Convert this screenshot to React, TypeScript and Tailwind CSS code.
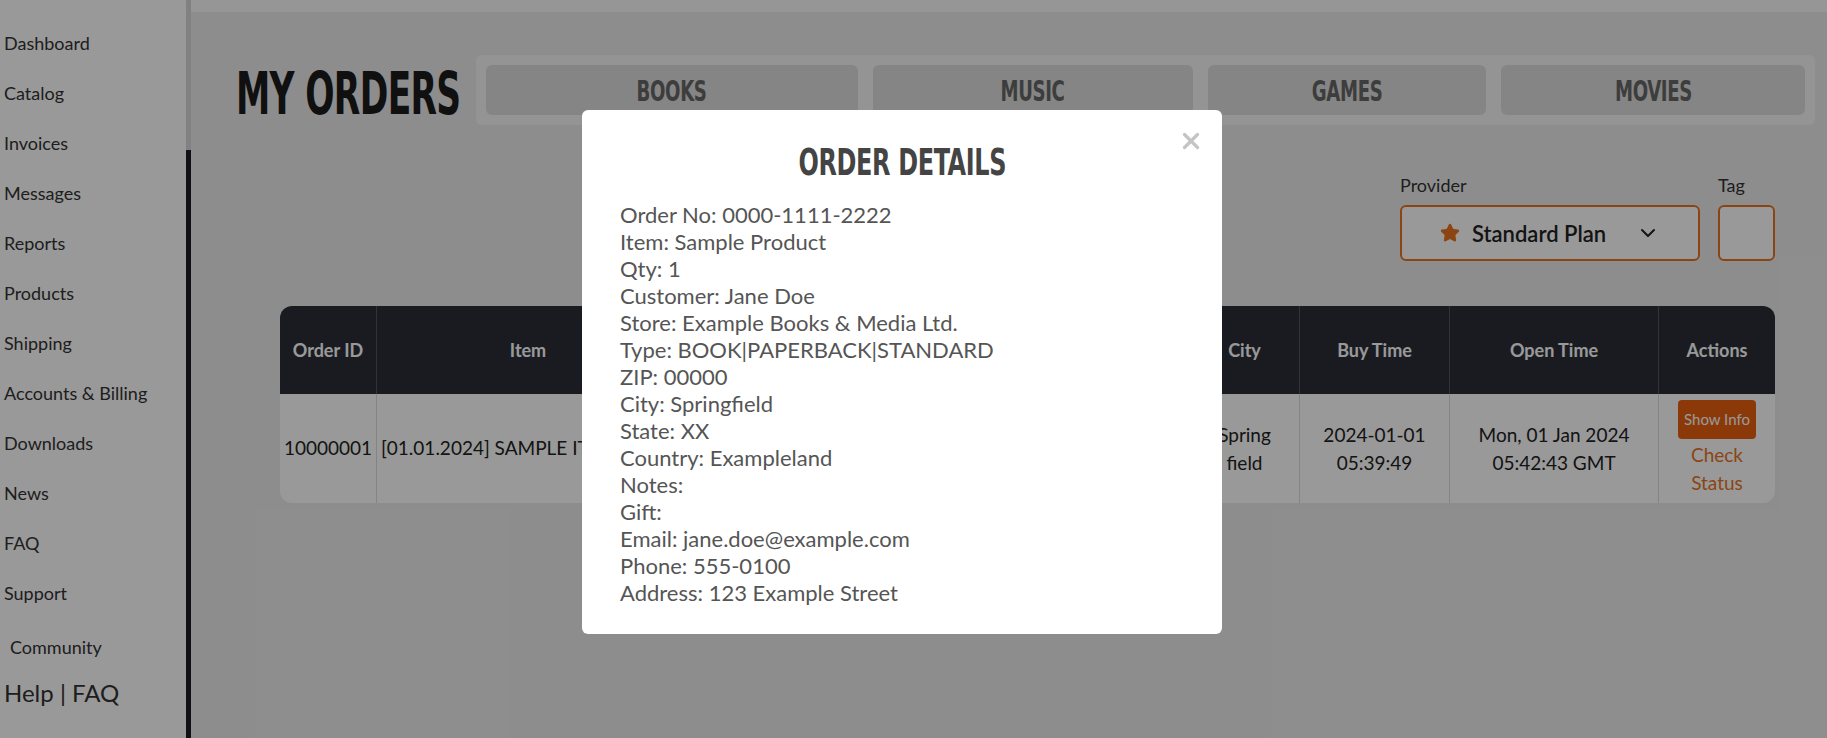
import React from 'react';
import { ChevronDown, Star, X } from 'lucide-react';

const navItems = [
  'Dashboard',
  'Catalog',
  'Invoices',
  'Messages',
  'Reports',
  'Products',
  'Shipping',
  'Accounts & Billing',
  'Downloads',
  'News',
  'FAQ',
  'Support',
];

const tabs = [
  { label: 'BOOKS', w: 'w-[372px]' },
  { label: 'MUSIC', w: 'w-[320px]' },
  { label: 'GAMES', w: 'w-[278px]' },
  { label: 'MOVIES', w: 'w-[304px]' },
];

const details = [
  'Order No: 0000-1111-2222',
  'Item: Sample Product',
  'Qty: 1',
  'Customer: Jane Doe',
  'Store: Example Books & Media Ltd.',
  'Type: BOOK|PAPERBACK|STANDARD',
  'ZIP: 00000',
  'City: Springfield',
  'State: XX',
  'Country: Exampleland',
  'Notes:',
  'Gift:',
  'Email: jane.doe@example.com',
  'Phone: 555-0100',
  'Address: 123 Example Street',
];

const condensed = { fontFamily: '"DejaVu Sans Condensed", "DejaVu Sans", sans-serif' };

function App() {
  return (
    <div className="relative w-[1827px] h-[738px] overflow-hidden bg-[#ececec] font-['Lato',sans-serif] text-[#444]">
      <div className="flex h-full">
        {/* Sidebar */}
        <aside className="flex w-[191px] shrink-0 h-full">
          <div className="w-[186px] bg-white pt-[30px]">
            <ul className="flex flex-col">
              {navItems.map((item) => (
                <li key={item} className="h-[50px] pl-1 text-[18px] text-[#333] whitespace-nowrap">
                  {item}
                </li>
              ))}
            </ul>
            <div className="mt-[4px] pl-[10px] text-[18px] text-[#333]">Community</div>
            <div className="mt-[14px] pl-1 text-[24px] text-[#333]">Help | FAQ</div>
          </div>
          <div className="flex flex-col w-[5px]">
            <div className="h-[150px] bg-[#d8d8d8]" />
            <div className="flex-1 bg-[#1a1d24]" />
          </div>
        </aside>

        {/* Main */}
        <main className="flex-1 flex flex-col">
          <div className="h-[12px] bg-[#fafafa]" />
          <div className="flex items-center pl-[45px] pr-[11px] mt-[43px]">
            <div className="w-[240px]">
              <h1
                className="inline-block origin-left scale-x-[0.66] text-[58px] font-bold tracking-[-1px] text-[#1b1b1b] leading-none whitespace-nowrap translate-y-[4px]"
                style={condensed}
              >
                MY ORDERS
              </h1>
            </div>
            <div className="flex gap-[15px] bg-[#f7f7f7] rounded-md p-[10px] h-[70px]">
              {tabs.map((t) => (
                <button
                  key={t.label}
                  className={`${t.w} h-[50px] rounded-md bg-[#dedede] text-[#666]`}
                >
                  <span
                    className="inline-block scale-x-[0.72] text-[28px] font-bold tracking-[-0.5px] translate-y-[2px]"
                    style={condensed}
                  >
                    {t.label}
                  </span>
                </button>
              ))}
            </div>
          </div>

          {/* Filters */}
          <div className="flex justify-end gap-[18px] pr-[52px] mt-[47px]">
            <div className="flex flex-col gap-[6px]">
              <span className="text-[18px] text-[#333]">Provider</span>
              <div className="flex items-center gap-[12px] w-[300px] h-[56px] border-2 border-[#e8731f] rounded-md bg-white px-[38px]">
                <Star className="w-5 h-5 fill-[#e8731f] text-[#e8731f]" />
                <span className="text-[22px] font-semibold text-[#222]">Standard Plan</span>
                <ChevronDown className="w-6 h-6 ml-auto text-[#222]" />
              </div>
            </div>
            <div className="flex flex-col gap-[6px]">
              <span className="text-[18px] text-[#333]">Tag</span>
              <div className="w-[57px] h-[56px] border-2 border-[#e8731f] rounded-md bg-white" />
            </div>
          </div>

          {/* Table */}
          <div className="ml-[89px] mr-[52px] mt-[45px] rounded-xl overflow-hidden bg-white">
            <div className="flex h-[88px] bg-[#2a2e38] text-white text-[18px] font-bold">
              <div className="w-[97px] flex items-center justify-center border-r border-[#555]">Order ID</div>
              <div className="w-[303px] flex items-center justify-center border-r border-[#555]">Item</div>
              <div className="w-[210px] border-r border-[#555]" />
              <div className="w-[300px] border-r border-[#555]" />
              <div className="w-[110px] flex items-center justify-center border-r border-[#555]">City</div>
              <div className="w-[150px] flex items-center justify-center border-r border-[#555]">Buy Time</div>
              <div className="w-[209px] flex items-center justify-center border-r border-[#555]">Open Time</div>
              <div className="flex-1 flex items-center justify-center">Actions</div>
            </div>
            <div className="flex h-[109px] text-[19px] text-[#222]">
              <div className="w-[97px] flex items-center justify-center border-r border-[#ddd]">10000001</div>
              <div className="w-[303px] flex items-center pl-[4px] border-r border-[#ddd] whitespace-nowrap overflow-hidden">[01.01.2024] SAMPLE ITEM</div>
              <div className="w-[210px] border-r border-[#ddd]" />
              <div className="w-[300px] border-r border-[#ddd]" />
              <div className="w-[110px] flex items-center justify-center text-center border-r border-[#ddd] leading-[28px]">
                Spring
                <br />
                field
              </div>
              <div className="w-[150px] flex items-center justify-center text-center border-r border-[#ddd] leading-[28px]">
                2024-01-01
                <br />
                05:39:49
              </div>
              <div className="w-[209px] flex items-center justify-center text-center border-r border-[#ddd] leading-[28px]">
                Mon, 01 Jan 2024
                <br />
                05:42:43 GMT
              </div>
              <div className="flex-1 flex flex-col items-center justify-center">
                <button className="bg-[#e8600f] text-white text-[15px] rounded px-[6px] py-[8px]">Show Info</button>
                <span className="text-[19px] text-[#e8731f] leading-[28px] mt-[2px]">Check</span>
                <span className="text-[19px] text-[#e8731f] leading-[28px]">Status</span>
              </div>
            </div>
          </div>
        </main>
      </div>

      {/* Overlay */}
      <div className="absolute inset-0 bg-black/40" />

      {/* Modal */}
      <div className="absolute left-[582px] top-[110px] w-[640px] h-[524px] bg-white rounded-md">
        <button className="absolute right-[18px] top-[18px] text-[#c4c4c4]">
          <X className="w-[26px] h-[26px]" strokeWidth={3} />
        </button>
        <div className="text-center mt-[24px]">
          <h2
            className="inline-block scale-x-[0.7] text-[38px] font-bold tracking-[-0.5px] text-[#444]"
            style={condensed}
          >
            ORDER DETAILS
          </h2>
        </div>
        <div className="pl-[38px] mt-[10px] text-[22px] leading-[27px] text-[#555]">
          {details.map((line) => (
            <div key={line}>{line}</div>
          ))}
        </div>
      </div>
    </div>
  );
}

export default App;
